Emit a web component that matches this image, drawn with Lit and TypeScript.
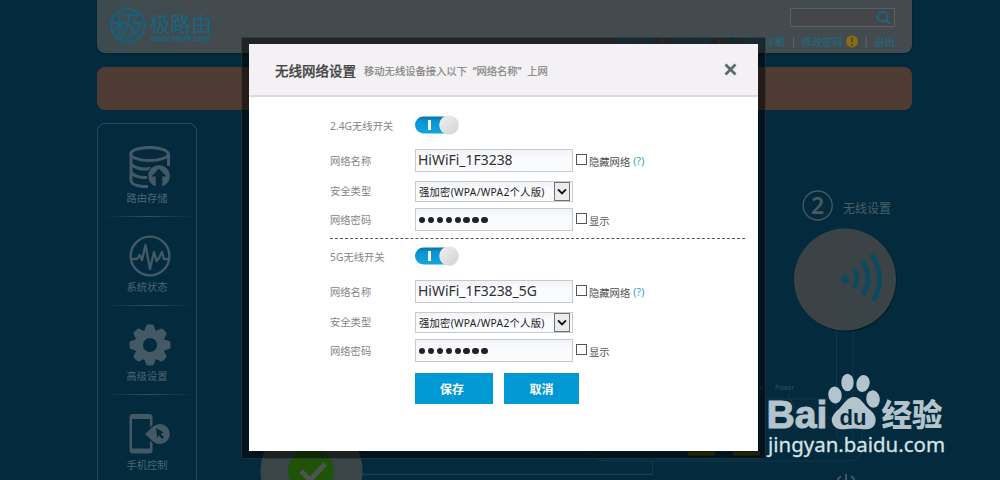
import { LitElement, html, css, svg } from "lit";
import { customElement, property } from "lit/decorators.js";

const NAV = [
  {
    label: "路由存储",
    icon: svg`<g fill="none" stroke="currentColor" stroke-width="3">
      <ellipse cx="20.500" cy="8" rx="18.800" ry="6.600"/><path d="M2 8V35C3 39 11 41 19 40.500M39.500 8V20M2 17C4 22 13 24 22 22.500M2 26C4 30 11 32 18 31.500"/></g>
      <circle cx="30" cy="30" r="11.800" fill="#032b3d"/>
      <circle cx="30" cy="30" r="10.800" fill="currentColor"/>
      <path d="M30 22.500l7.500 8h-4.200V42h-6.600V30.500h-4.200z" fill="#032b3d"/>`,
  },
  {
    label: "系统状态",
    icon: svg`<circle cx="21" cy="21" r="19.400" fill="none" stroke="currentColor" stroke-width="2.400"/>
      <path d="M3 24H8L10.500 20L13 25L16.500 10L21 34L25 17L27.500 26L30 23L33 17L35 24H39" fill="none" stroke="currentColor" stroke-width="2.300" stroke-linejoin="round"/>`,
  },
  {
    label: "高级设置",
    icon: svg`<g fill="currentColor">${[0, 45, 90, 135, 180, 225, 270, 315].map(
      (a) => svg`<path d="M15 8L17 2Q17.400 .6 18.600 .6H23.400Q24.600 .6 25 2L27 8z" transform="rotate(${a} 21 21)"/>`
    )}</g><circle cx="21" cy="21" r="11.300" fill="none" stroke="currentColor" stroke-width="8.500"/>`,
  },
  {
    label: "手机控制",
    icon: svg`<path fill-rule="evenodd" fill="currentColor" d="M4 1H20Q23.500 1 23.500 4V37Q23.500 40.500 20 40.500H4Q.5 40.500 .5 37V4Q.5 1 4 1zM3 6V35.500H21V6z"/>
      <path d="M15 21L23.500 13A10.800 10.800 0 1 1 23.500 29z" fill="currentColor" stroke="#032b3d" stroke-width="1.500"/>
      <path d="M27 15L35 19.500L31.800 20.800L34.800 24.500L33 26L30 22.300L28.200 25z" fill="#032b3d"/>`,
  },
];

@customElement("side-nav")
class SideNav extends LitElement {
  static styles = css`
    :host { display: block; box-sizing: border-box; width: 100px; height: 370px; border: 1px solid #294856; border-radius: 8px 8px 0 0; color: #435966; }
    .item { height: 89px; box-sizing: border-box; padding-top: 18px; display: flex; flex-direction: column; align-items: center; position: relative; }
    .item:first-child { height: 93px; padding-top: 22px; }
    .item::after { content: ""; position: absolute; left: 6px; right: 3px; bottom: 0; height: 1px; background: linear-gradient(90deg, transparent, #34515e 50%, transparent); }
    .icon { width: 42px; height: 42px; display: block; margin-left: 5px; }
    .label { font-size: 10.3px; line-height: 14px; margin-top: 3px; color: #4b6672; }
  `;
  render() {
    return html`${NAV.map(
      (n) => html`<div class="item"><svg class="icon" viewBox="0 0 42 42">${n.icon}</svg><span class="label">${n.label}</span></div>`
    )}`;
  }
}

@customElement("wifi-band")
class WifiBand extends LitElement {
  @property() band = "";
  @property() ssid = "";
  static styles = css`
    :host { display: grid; grid-template-columns: 85px 158px 1fr; grid-template-rows: 35px 32px 27px 23px; align-items: start; font-size: 10.3px; color: #858585; }
    .label { display: flex; align-items: center; height: 22px; box-sizing: border-box; }
    .label.high { height: 19px; }
    .toggle { width: 44px; height: 20px; margin-top: 1px; display: block; }
    .wide { grid-column: 2 / 4; }
    .field { box-sizing: border-box; height: 23px; border: 1px solid #c6c9cd; background: linear-gradient(#f1f3f6, #fafbfd 40%); color: #303030; display: flex; align-items: center; }
    .ssid { font-size: 13.950px; padding: 0 2px 1px; line-height: 20px; white-space: pre; }
    .select { height: 21px; padding: 0 2px 0 3px; justify-content: space-between; font-size: 10.300px; color: #222; white-space: nowrap; }
    .select-text { letter-spacing: .26px; margin-top: -1px; }
    .arrow { width: 16px; height: 19px; box-sizing: border-box; border: 1px solid #707070; background: #ececec; display: flex; align-items: center; justify-content: center; }
    .arrow svg { width: 10px; height: 7px; }
    .dots { gap: 2.500px; padding: 0 3px; }
    .dot { width: 6.400px; height: 6.400px; border-radius: 50%; background: #222; margin-top: 1px; }
    .check { display: flex; align-items: center; height: 22px; padding-left: 3px; color: #505050; gap: 2px; white-space: nowrap; }
    .box { width: 11px; height: 11px; box-sizing: border-box; border: 1px solid #555; background: #fff; margin-top: -1px; }
    .check-text { padding-top: 2px; }
    .help { color: #2f9db5; padding: 2px 0 0 1px; letter-spacing: .2px; }
  `;
  render() {
    return html`
      <span class="label">${this.band}无线开关</span>
      <svg class="toggle wide" viewBox="0 0 44 20">
        <defs>
          <linearGradient id="t" x2="0" y2="1"><stop stop-color="#0871a9"/><stop offset=".25" stop-color="#0793d0"/><stop offset="1" stop-color="#14a5df"/></linearGradient>
          <linearGradient id="k" x2="1" y2="1"><stop stop-color="#f0f0f0"/><stop offset="1" stop-color="#d2d2d2"/></linearGradient>
        </defs>
        <rect y="1.500" width="38" height="17" rx="8.500" fill="url(#t)"/>
        <rect x="13" y="5" width="3" height="10" fill="#fff"/>
        <circle cx="34" cy="10" r="9.800" fill="url(#k)"/>
      </svg>
      <span class="label">网络名称</span>
      <div class="field ssid">${this.ssid}</div>
      <div class="check"><i class="box"></i><span class="check-text">隐藏网络</span><span class="help">(?)</span></div>
      <span class="label high">安全类型</span>
      <div class="field select"><span class="select-text">强加密(WPA/WPA2个人版)</span><span class="arrow"><svg viewBox="0 0 10 7"><path d="M1 1.300L5 5.300L9 1.300" fill="none" stroke="#111" stroke-width="1.900"/></svg></span></div>
      <span></span>
      <span class="label">网络密码</span>
      <div class="field dots">${Array.from({ length: 8 }, () => html`<i class="dot"></i>`)}</div>
      <div class="check"><i class="box"></i><span class="check-text">显示</span></div>
    `;
  }
}

@customElement("app-root")
class AppRoot extends LitElement {
  static styles = css`
    :host { display: block; position: relative; width: 1000px; height: 480px; overflow: hidden; background: #032b3d; font-family: "Noto Sans", "Noto Sans CJK SC", sans-serif; }
    .page { width: 815px; margin-left: 97px; }
    .top { height: 53px; box-sizing: border-box; border-radius: 0 0 8px 8px; background: linear-gradient(90deg, #3c4b50, #434b4e 12%); display: flex; justify-content: space-between; padding: 8px 17px 0 12px; box-shadow: 0 1px 2px #01202f; }
    .logo { width: 110px; height: 38px; }
    .tools { display: flex; flex-direction: column; align-items: flex-end; }
    .search { width: 105px; height: 19px; box-sizing: border-box; border: 1px solid #5d5e62; background: #444649; display: flex; justify-content: flex-end; align-items: center; padding-right: 3px; }
    .search svg { width: 15px; height: 15px; }
    .links { display: flex; align-items: center; height: 14px; margin-top: 7px; font-size: 10.300px; color: #186c89; white-space: nowrap; }
    .sep { width: 16.500px; text-align: center; color: #6b6f71; }
    .links svg { width: 12px; height: 13px; }
    .steth { margin-right: 4px; }
    .warn { margin-left: 3px; }
    .notice { height: 43px; margin-top: 14px; border-radius: 8px; background: #4d3b34; }
    side-nav { margin-top: 13px; }
    .scene { position: absolute; left: 0; top: 0; width: 1000px; height: 480px; }
    .dialog { position: absolute; left: 241px; top: 37px; width: 525px; height: 422px; box-sizing: border-box; border: 8px solid rgba(0, 0, 0, 0.52); border-top-width: 7px; outline: 1px solid rgba(120, 130, 135, 0.25); outline-offset: -1px; background: #fff; background-clip: padding-box; }
    .head { height: 53px; box-sizing: border-box; border-bottom: 2px solid #dcdadb; background: #f3f1f3; display: flex; align-items: center; padding: 1px 21px 0 26px; }
    .title { font-size: 13.500px; font-weight: 500; color: #454545; -webkit-text-stroke: .25px #454545; }
    .sub { font-size: 10.300px; margin-left: 8px; color: #858585; flex: 1; padding-top: 1px; -webkit-text-stroke: .2px #858585; white-space: nowrap; }
    .q { font-family: "Noto Sans"; display: inline-block; width: 9.500px; }
    .q.open { text-align: right; }
    .close { width: 13px; height: 13px; margin-top: -1px; }
    .form { padding: 17px 13px 0 81px; display: flex; flex-direction: column; }
    .rule { border-top: 1px dashed #555; height: 0; margin: 7px 0 6px; }
    .actions { display: flex; gap: 11px; margin: 11px 0 0 85px; }
    .btn { width: 75px; height: 31px; background: #0099d4; color: #fff; font-size: 12px; font-weight: 700; display: flex; align-items: center; justify-content: center; }
    .btn.save { width: 78px; padding-right: 4px; box-sizing: border-box; }
  `;

  logo() {
    return html`<svg class="logo" viewBox="109 8 110 38">
      <g fill="none" stroke="#16617e">
        <circle cx="128" cy="25.500" r="16.700" stroke-width="2"/>
        <path d="M113 23H125M119.500 14V37M119 25L114 31M120.500 25L124 29M123 15H137L133 23H142M129 16Q128 32 120 40M141 23Q138 33 127 38M129 24Q133 33 139 37" stroke-width="1.900"/>
      </g>
      <text x="149.500" y="31.500" font-size="20.800" fill="#166583" textLength="62.500">极路由</text>
      <text x="151" y="40.500" font-size="7.200" font-family="Liberation Sans" fill="#166583" stroke="#166583" stroke-width=".3" textLength="60" lengthAdjust="spacingAndGlyphs">www.hiwifi.com</text>
    </svg>`;
  }

  scene() {
    return html`<svg class="scene" viewBox="0 0 1000 480">
      <g fill="none" stroke="#12384a">
        <path d="M836.500 330V430Q836.500 444 846 444H853V330M766 399H850Q862 399 862 410V448Q862 461 848 461H608Q596 461 590 452M652.500 461V474.500M788 394L800 418H836"/>
      </g>
      <path d="M361 474.500H652" stroke="#1b404f" stroke-width="1.500"/>
      <circle cx="817.700" cy="205.500" r="14.500" fill="none" stroke="#485961" stroke-width="1.300"/>
      <text x="817.700" y="214" text-anchor="middle" font-size="23" font-weight="600" fill="#4c585e">2</text>
      <text x="843" y="212.500" font-size="12" fill="#46606c">无线设置</text>
      <circle cx="846" cy="281" r="51" fill="#01202d"/>
      <circle cx="845" cy="279.500" r="51" fill="#3b4346"/>
      <path d="M836.500 284V330M853 284V330" stroke="#384448" stroke-width=".7"/>
      <circle cx="844.800" cy="279.300" r="4.200" fill="#0c4a60"/>
      <g fill="none" stroke="#0c4a60">
        <path d="M854 269.500Q860 279 854 288.500" stroke-width="4.500"/>
        <path d="M862.500 261Q873.500 279 862.500 295" stroke-width="5"/>
        <path d="M871.500 254Q887 278 873 301" stroke-width="4.800"/>
      </g>
      <text x="775" y="389.500" font-size="6.300" fill="#36505b" textLength="19">Power</text>
      <text x="759.500" y="389.500" font-size="6.300" fill="#36505b">t</text>
      <circle cx="311.500" cy="471" r="51" fill="#3b4548"/>
      <circle cx="311" cy="471" r="23" fill="#1e5309"/>
      <path d="M301 471L310 480L325 464" fill="none" stroke="#4b554d" stroke-width="5"/>
      <path d="M688 453.500H715M733 453.500H760" stroke="#4b450d" stroke-width="4"/>
      <path d="M846 474V480M841 476Q838 478 838 480M851 476Q854 478 854 480" fill="none" stroke="#405762" stroke-width="2"/>
    </svg>`;
  }

  watermark() {
    return html`<svg class="scene" viewBox="0 0 1000 480">
      <g fill="#b3c4cd">
        <text x="766.500" y="428" font-size="39" font-family="Liberation Sans" font-weight="700" stroke="#b3c4cd" stroke-width="1" textLength="61" lengthAdjust="spacingAndGlyphs">Bai</text>
        <ellipse cx="835" cy="395" rx="6.700" ry="8.500" transform="rotate(-10 835 395)"/>
        <ellipse cx="847.500" cy="382.500" rx="6.200" ry="8.700"/>
        <ellipse cx="863" cy="383.500" rx="6.600" ry="8.600" transform="rotate(14 863 383.500)"/>
        <ellipse cx="873" cy="399" rx="6.800" ry="8.700" transform="rotate(-8 873 399)"/>
        <path d="M854 397C847 397 844 404 839 409C833 414 831 418 832 422C834 429 840 430 847 429Q854 428 861 429C868 430 874 429 875.500 422C876.500 417 874 413 869 409C863 404 861 397 854 397z"/>
        <text x="881.500" y="425.500" font-size="30.500" font-family="Noto Sans CJK SC" font-weight="900" textLength="61" lengthAdjust="spacingAndGlyphs">经验</text>
      </g>
      <text x="839.500" y="424.500" font-size="22" font-family="Liberation Sans" font-weight="700" fill="#032b3d" textLength="27" lengthAdjust="spacingAndGlyphs">du</text>
      <text x="768" y="452" font-size="20.500" font-family="Noto Sans" fill="#d5e2e8" stroke="#d5e2e8" stroke-width=".3" textLength="177" lengthAdjust="spacingAndGlyphs">jingyan.baidu.com</text>
    </svg>`;
  }

  render() {
    return html`
      <div class="page">
        <div class="top">
          ${this.logo()}
          <div class="tools">
            <div class="search"><svg viewBox="0 0 15 15"><g fill="none" stroke="#17687f" stroke-width="2"><circle cx="6.500" cy="6.500" r="5"/><path d="M10 10L14 14"/></g></svg></div>
            <div class="links">
              <span>APP下载</span><span class="sep">|</span><span>实时流量</span><span class="sep">|</span>
              <svg class="steth" viewBox="0 0 12 13"><path d="M3 1H1V4Q1 7 4 7T7 4V1H5M4 7V9Q4 12 7 12T10 8" fill="none" stroke="#17647f" stroke-width="1.500"/><circle cx="10" cy="7" r="1.500" fill="#17647f"/></svg>
              <span>网络诊断</span><span class="sep">|</span><span>修改密码</span>
              <svg class="warn" viewBox="0 0 12 13"><circle cx="6" cy="6.500" r="6" fill="#8a6d0c"/><path d="M6 2.500V7.500M6 9V10.800" stroke="#3f4542" stroke-width="1.700"/></svg>
              <span class="sep">|</span><span>退出</span>
            </div>
          </div>
        </div>
        <div class="notice"></div>
        <side-nav></side-nav>
      </div>
      ${this.scene()}
      <div class="dialog">
        <div class="head">
          <span class="title">无线网络设置</span>
          <span class="sub">移动无线设备接入以下<span class="q open">“</span>网络名称<span class="q">”</span>上网</span>
          <svg class="close" viewBox="0 0 13 13"><path d="M1.500 1.500L11.500 11.500M11.500 1.500L1.500 11.500" stroke="#5d6a70" stroke-width="2.800"/></svg>
        </div>
        <div class="form">
          <wifi-band band="2.4G" ssid="HiWiFi_1F3238"></wifi-band>
          <div class="rule"></div>
          <wifi-band band="5G" ssid="HiWiFi_1F3238_5G"></wifi-band>
          <div class="actions"><div class="btn save">保存</div><div class="btn">取消</div></div>
        </div>
      </div>
      ${this.watermark()}
    `;
  }
}
